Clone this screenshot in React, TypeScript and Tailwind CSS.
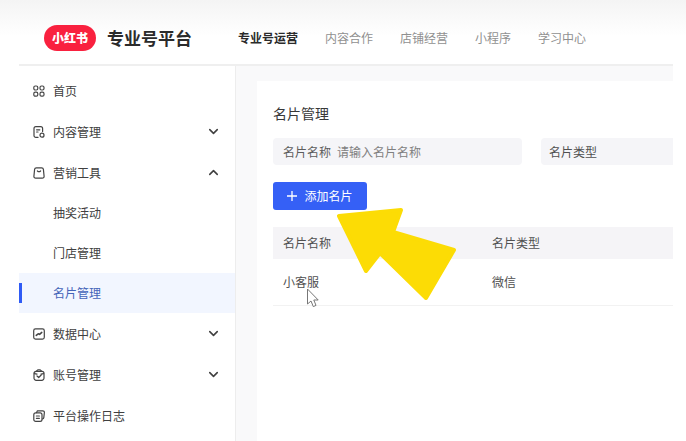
import type { ReactNode } from 'react';
import { ChevronDown, ChevronUp } from 'lucide-react';

type NavItem = { label: string; icon: ReactNode; open?: boolean; children?: string[] };

const TABS = ['专业号运营', '内容合作', '店铺经营', '小程序', '学习中心'];

const CARDS = [{ name: '小客服', type: '微信' }];

function Icon({ children }: { children: ReactNode }) {
  return (
    <svg viewBox="0 0 12 12" className="w-3 h-3 shrink-0" fill="none" stroke="#444" strokeWidth="1.2"
      strokeLinecap="round" strokeLinejoin="round" aria-hidden="true">
      {children}
    </svg>
  );
}

const MENU: NavItem[] = [
  {
    label: '首页',
    icon: (
      <Icon>
        <rect x="0.8" y="1" width="4" height="4" rx="1.5" />
        <rect x="7" y="1" width="4" height="4" rx="1.5" />
        <rect x="0.8" y="7.2" width="4" height="4" rx="1.5" />
        <rect x="7" y="7.2" width="4" height="4" rx="1.5" />
      </Icon>
    ),
  },
  {
    label: '内容管理',
    children: [],
    icon: (
      <Icon>
        <path d="M5 11.4H2.9A1.9 1.9 0 0 1 1 9.5V2.5A1.9 1.9 0 0 1 2.9 .6H7.7A1.9 1.9 0 0 1 9.6 2.5V5.4" />
        <path d="M3.6 3.8H6.8M3.6 6H5" />
        <circle cx="9" cy="9.2" r="2" />
      </Icon>
    ),
  },
  {
    label: '营销工具',
    open: true,
    children: ['抽奖活动', '门店管理', '名片管理'],
    icon: (
      <Icon>
        <path d="M3.4 .8H8.6A1.8 1.8 0 0 1 10.4 2.4L11.1 9.2A1.8 1.8 0 0 1 9.3 11.2H2.7A1.8 1.8 0 0 1 .9 9.2L1.6 2.4A1.8 1.8 0 0 1 3.4 .8Z" />
        <path d="M4.4 4Q6 5.4 7.6 4" />
      </Icon>
    ),
  },
  {
    label: '数据中心',
    children: [],
    icon: (
      <Icon>
        <rect x="0.7" y="0.9" width="10.6" height="10.2" rx="1.8" />
        <path d="M3.2 7.4L5.2 5.8L6.6 6.4L8.8 4.4" strokeWidth="1.5" />
      </Icon>
    ),
  },
  {
    label: '账号管理',
    children: [],
    icon: (
      <Icon>
        <path d="M3 2.4H9A2 2 0 0 1 11 4.4V9A2.2 2.2 0 0 1 8.8 11.3H3.2A2.2 2.2 0 0 1 1 9V4.4A2 2 0 0 1 3 2.4Z" />
        <path d="M3.2 2.4L4.8 .8H7.2L8.8 2.4M1.4 4.6L4 5.2M10.6 4.6L8 5.2M4 7L5.7 8.5L8.2 6" />
      </Icon>
    ),
  },
  {
    label: '平台操作日志',
    icon: (
      <Icon>
        <path d="M3.6 2.6L4.4 .8H9.8A1.6 1.6 0 0 1 11.4 2.4L10.8 7.6A1.6 1.6 0 0 1 9.4 9" />
        <rect x="0.8" y="2.8" width="8.2" height="8.5" rx="1.9" />
        <path d="M3.4 6H6.4M3.4 8.3H6.4" />
      </Icon>
    ),
  },
];

function MenuRow({ item }: { item: NavItem }) {
  const row = 'flex w-full items-center gap-2 h-[41px] px-[14px] text-left';
  if (!item.children) {
    return <a href="#" className={row}>{item.icon}{item.label}</a>;
  }
  const Chevron = item.open ? ChevronUp : ChevronDown;
  return (
    <button type="button" aria-expanded={!!item.open} className={row}>
      {item.icon}
      <span className="flex-1">{item.label}</span>
      <Chevron size={15} strokeWidth={2.5} />
    </button>
  );
}

function Sidebar({ active }: { active: string }) {
  return (
    <nav className="w-[217px] shrink-0 bg-white border-r border-[#ededed] pt-1 text-[#404040]">
      {MENU.map(item => (
        <div key={item.label}>
          <MenuRow item={item} />
          {item.open && item.children?.map(child => (
            <a key={child} href="#"
              className={`flex items-center gap-[31px] h-10 ${child === active ? 'bg-[#f2f6ff] text-[#4464b8]' : ''}`}>
              <span className={`w-[3px] h-5 ${child === active ? 'bg-[#2f5bf5]' : ''}`} />
              {child}
            </a>
          ))}
        </div>
      ))}
    </nav>
  );
}

export default function App() {
  return (
    <div className="min-h-screen flex flex-col pl-[19px] pr-[13px] text-xs bg-white bg-linear-to-b from-[#f4f4f4] from-0% to-white to-[36px] font-['Noto_Sans_CJK_SC',sans-serif]">
      {/* Header */}
      <header className="flex items-center h-[66px] pt-3 pl-[25px] border-b-2 border-[#efefef] whitespace-nowrap">
        <span className="flex items-center justify-center w-[52px] h-[26px] rounded-full bg-[#f9213f] text-white text-xs font-black">
          小红书
        </span>
        <h1 className="ml-[11px] text-[17px] font-bold text-[#2b2b2b]">专业号平台</h1>
        <nav className="flex gap-[27px] ml-[46px] text-[#909090]">
          {TABS.map((tab, i) => (
            <a key={tab} href="#" className={i === 0 ? 'font-bold text-[#2b2b2b]' : ''}>{tab}</a>
          ))}
        </nav>
      </header>

      <div className="flex flex-1">
        <Sidebar active="名片管理" />

        {/* Content */}
        <main className="flex-1 min-w-0 bg-[#f9f9fa] pt-[15px] pl-[21px] flex">
          <section className="relative flex-1 min-w-0 bg-white pt-[22px] pl-4">
            <h2 className="text-sm leading-5 text-[#383838]">名片管理</h2>

            {/* Filters */}
            <div className="flex gap-[19px] mt-[15px]">
              <div className="flex items-center gap-1.5 w-[249px] h-[27px] px-[10px] shrink-0 rounded bg-[#f5f5f8]">
                <label htmlFor="card-name" className="shrink-0 text-[#5c5c5c]">名片名称</label>
                <input id="card-name" type="text" placeholder="请输入名片名称"
                  className="flex-1 min-w-0 bg-transparent outline-none placeholder:text-[#808080]" />
              </div>
              <div className="flex items-center gap-1.5 flex-1 min-w-0 h-[27px] pl-2 rounded-l bg-[#f5f5f8]">
                <label htmlFor="card-type" className="shrink-0 text-[#505050]">名片类型</label>
                <select id="card-type" className="flex-1 min-w-0 appearance-none bg-transparent outline-none" />
              </div>
            </div>

            <button type="button"
              className="flex items-center justify-center gap-[7px] w-[94px] h-7 mt-[17px] rounded-[3px] bg-[#3560f6] text-white">
              <svg viewBox="0 0 10 10" className="w-[10px] h-[10px]" stroke="currentColor" strokeWidth="1.3" aria-hidden="true">
                <path d="M5 0V10M0 5H10" />
              </svg>
              添加名片
            </button>

            {/* Table */}
            <table className="w-full mt-[17px] text-left text-[#505050]">
              <thead>
                <tr className="h-8 bg-[#f5f4f7]">
                  <th className="w-[209px] pl-[10px] font-normal">名片名称</th>
                  <th className="pl-[10px] font-normal">名片类型</th>
                </tr>
              </thead>
              <tbody>
                {CARDS.map(card => (
                  <tr key={card.name} className="h-[46px] border-b border-[#f2f2f2]">
                    <td className="pl-[10px]">{card.name}</td>
                    <td className="pl-[10px]">{card.type}</td>
                  </tr>
                ))}
              </tbody>
            </table>

            {/* Pointer and arrow over the page */}
            <svg viewBox="0 0 120 94" className="absolute left-[80px] top-[126px] w-[120px] h-[94px]" aria-hidden="true">
              <path d="M2 9L64 3L56 25L117 43L89 91L43 46L29 64Z" fill="#fcdc05" stroke="#fcdc05" strokeWidth="4" strokeLinejoin="round" />
            </svg>
            <svg viewBox="0 0 14 20" className="absolute left-[49px] top-[207px] w-[14px] h-5" aria-hidden="true">
              <path d="M1.5 1V16L5 13L7.3 18.6L10 17.4L7.8 12H12.2Z" fill="#fff" stroke="#777" strokeWidth="1" strokeLinejoin="round" />
            </svg>
          </section>
        </main>
      </div>
    </div>
  );
}
